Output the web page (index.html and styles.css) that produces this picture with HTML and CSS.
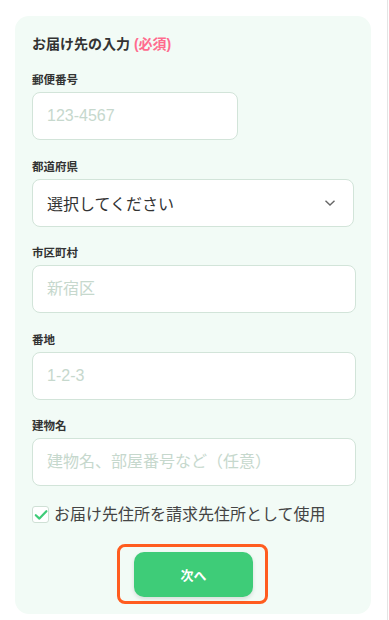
FILE: index.html
```html
<!DOCTYPE html>
<html lang="ja">
<head>
<meta charset="utf-8">
<link rel="stylesheet" href="styles.css">
</head>
<body>
<div class="page">
  <div class="card">
    <h2 class="title">お届け先の入力 <span class="req">(必須)</span></h2>
    <div class="field">
      <label class="label">郵便番号</label>
      <input class="input short" type="text" placeholder="123-4567">
    </div>
    <div class="field">
      <label class="label">都道府県</label>
      <div class="select">
        <span>選択してください</span>
        <svg class="chev" width="12" height="8" viewBox="0 0 12 8"><path d="M1.5 1.8 L6 6 L10.5 1.8" fill="none" stroke="#666" stroke-width="1.4"/></svg>
      </div>
    </div>
    <div class="field">
      <label class="label">市区町村</label>
      <input class="input" type="text" placeholder="新宿区">
    </div>
    <div class="field">
      <label class="label">番地</label>
      <input class="input" type="text" placeholder="1-2-3">
    </div>
    <div class="field">
      <label class="label">建物名</label>
      <input class="input" type="text" placeholder="建物名、部屋番号など（任意）">
    </div>
    <div class="check-row">
      <span class="box"><svg width="14" height="12" viewBox="0 0 14 12"><path d="M1.8 6.2 L5.4 9.6 L12.4 2.2" fill="none" stroke="#3ecc78" stroke-width="2.2" stroke-linecap="round" stroke-linejoin="round"/></svg></span>
      <span class="check-text">お届け先住所を請求先住所として使用</span>
    </div>
    <div class="btn-wrap">
      <div class="highlight">
        <button class="btn">次へ</button>
      </div>
    </div>
  </div>
</div>
</body>
</html>
```

FILE: styles.css
```css
* { box-sizing: border-box; }
html, body { margin: 0; padding: 0; background: #fff; }
body {
  font-family: "Liberation Sans", "Noto Sans CJK JP", sans-serif;
  color: #333;
}
.page {
  width: 388px;
  height: 620px;
  border-right: 1px solid #e4e4e4;
  padding: 16px 0 0 15px;
}
.card {
  width: 356px;
  background: #f2fbf6;
  border-radius: 14px;
  padding: 18px 15px 10px 17px;
}
.title {
  margin: 0 0 18px;
  font-size: 14px;
  line-height: 20px;
  font-weight: 700;
  color: #333;
}
.req { color: #ff6b8e; }
.field {
  display: flex;
  flex-direction: column;
  margin-bottom: 18.5px;
}
.label {
  font-size: 11.5px;
  line-height: 16px;
  font-weight: 700;
  color: #333;
  margin-bottom: 4px;
}
.input {
  width: 324px;
  height: 48px;
  border: 1px solid #d2e4d9;
  border-radius: 8px;
  background: #fff;
  padding: 0 14px;
  font-family: "Liberation Sans", "Noto Sans CJK JP", sans-serif;
  font-size: 16px;
  color: #333;
  outline: none;
}
.input.short { width: 206px; }
.input::placeholder { color: #c6d8cd; }
.select {
  width: 322px;
  height: 48px;
  border: 1px solid #d2e4d9;
  border-radius: 8px;
  background: #fff;
  padding: 0 17px 0 14px;
  display: flex;
  align-items: center;
  justify-content: space-between;
  font-size: 16px;
  color: #333;
}
.chev { display: block; }
.check-row {
  display: flex;
  align-items: center;
  gap: 5px;
  margin-top: 1.5px;
  height: 20px;
}
.box {
  width: 17px;
  height: 17px;
  border: 1px solid #cfe0d5;
  border-radius: 3px;
  background: #fff;
  display: flex;
  align-items: center;
  justify-content: center;
}
.box svg { display: block; }
.check-text {
  font-size: 16px;
  line-height: 20px;
  color: #444;
}
.btn-wrap {
  display: flex;
  justify-content: center;
  margin-top: 19px;
  padding-right: 3px;
}
.highlight {
  border: 3px solid #ff5c1f;
  border-radius: 8px;
  padding: 5px 12px 4px 14px;
}
.btn {
  display: block;
  width: 119px;
  height: 45px;
  border: none;
  border-radius: 10px;
  background: #3ecc78;
  color: #fff;
  font-family: "Liberation Sans", "Noto Sans CJK JP", sans-serif;
  font-size: 13px;
  font-weight: 700;
  box-shadow: 0 2px 4px rgba(0,0,0,0.12);
}
```
